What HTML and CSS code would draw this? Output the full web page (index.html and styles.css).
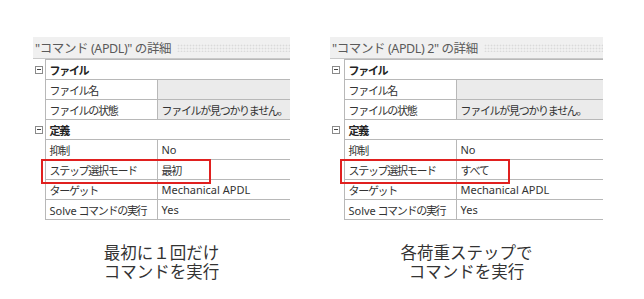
FILE: index.html
```html
<!doctype html>
<html>
<head>
<meta charset='utf-8'>
<title>コマンド (APDL) の詳細</title>
<link rel="stylesheet" href="styles.css">
</head>
<body>
<div class='page'>

  <div class='panel panel_first'>
    <div class='title'><span class='title_text'>"コマンド (APDL)" の詳細</span><span class='dots'></span></div>
    <table class='props'>
      <colgroup><col class='c_toggle'><col class='c_name'><col></colgroup>
      <tr class='group'><td class='toggle'><i class='minus'></i></td><td colspan='2' class='name'>ファイル</td></tr>
      <tr><td class='toggle'></td><td class='name'>ファイル名</td><td class='value grey'></td></tr>
      <tr><td class='toggle'></td><td class='name'>ファイルの状態</td><td class='value grey ja'>ファイルが見つかりません。</td></tr>
      <tr class='group'><td class='toggle'><i class='minus'></i></td><td colspan='2' class='name'>定義</td></tr>
      <tr><td class='toggle'></td><td class='name'>抑制</td><td class='value'>No</td></tr>
      <tr><td class='toggle'></td><td class='name mark'>ステップ選択モード<span class='highlight'></span></td><td class='value ja'>最初</td></tr>
      <tr><td class='toggle'></td><td class='name'>ターゲット</td><td class='value'>Mechanical APDL</td></tr>
      <tr class='last'><td class='toggle'></td><td class='name'><span class='latin'>Solve</span> コマンドの実行</td><td class='value'>Yes</td></tr>
    </table>
    <div class='caption'>
      <div class='caption_line'>最初に１回だけ</div>
      <div class='caption_line'>コマンドを実行</div>
    </div>
  </div>

  <div class='panel panel_second'>
    <div class='title'><span class='title_text'>"コマンド (APDL) 2" の詳細</span><span class='dots'></span></div>
    <table class='props'>
      <colgroup><col class='c_toggle'><col class='c_name'><col></colgroup>
      <tr class='group'><td class='toggle'><i class='minus'></i></td><td colspan='2' class='name'>ファイル</td></tr>
      <tr><td class='toggle'></td><td class='name'>ファイル名</td><td class='value grey'></td></tr>
      <tr><td class='toggle'></td><td class='name'>ファイルの状態</td><td class='value grey ja'>ファイルが見つかりません。</td></tr>
      <tr class='group'><td class='toggle'><i class='minus'></i></td><td colspan='2' class='name'>定義</td></tr>
      <tr><td class='toggle'></td><td class='name'>抑制</td><td class='value'>No</td></tr>
      <tr><td class='toggle'></td><td class='name mark'>ステップ選択モード<span class='highlight'></span></td><td class='value ja'>すべて</td></tr>
      <tr><td class='toggle'></td><td class='name'>ターゲット</td><td class='value'>Mechanical APDL</td></tr>
      <tr class='last'><td class='toggle'></td><td class='name'><span class='latin'>Solve</span> コマンドの実行</td><td class='value'>Yes</td></tr>
    </table>
    <div class='caption'>
      <div class='caption_line'>各荷重ステップで</div>
      <div class='caption_line'>コマンドを実行</div>
    </div>
  </div>

</div>
</body>
</html>
```

FILE: styles.css
```css
body {
  background: white;
  margin: 0;
  font-family: "Noto Sans", "Noto Sans CJK JP", sans-serif;
  color: #333;
}

.page {
  display: flex;
  gap: 40px;
  padding: 37px 0 0 33px;
}

.panel {
  display: flex;
  flex-direction: column;
}
.panel_first {
  width: 257px;
}
.panel_second {
  width: 273px;
}

.title {
  display: flex;
  align-items: center;
  height: 21px;
  padding-left: 2px;
  background: #f0f0f0;
  border-bottom: 1px solid #c9c9c9;
  color: #5a5a5a;
  font-size: 12.5px;
  letter-spacing: -0.4px;
  white-space: nowrap;
}
.dots {
  flex: 1;
  height: 8px;
  margin: 0 0 0 6px;
  background-image: radial-gradient(circle, #dadada 0.8px, transparent 1.1px);
  background-size: 3px 3px;
}

.props {
  border-collapse: collapse;
  table-layout: fixed;
  width: 100%;
  font-size: 11px;
}
.c_toggle {
  width: 12px;
}
.panel_second .c_toggle {
  width: 14px;
}
.c_name {
  width: 112px;
}
.props td {
  height: 19px;
  padding: 0 0 0 4px;
  border-top: 1px solid #b8b8b8;
  white-space: nowrap;
  overflow: hidden;
}
.props td.toggle {
  border: 0;
  padding: 0;
  text-align: left;
}
.props td.name {
  border-left: 1px solid #b8b8b8;
  border-right: 1px solid #b8b8b8;
  letter-spacing: -1.3px;
}
.props td.name .latin {
  letter-spacing: 0;
}
.props tr.group td.name {
  border-right: 0;
  font-weight: bold;
  color: #222;
}
.props tr.last td.name,
.props tr.last td.value {
  border-bottom: 1px solid #b8b8b8;
}
.props td.value.grey {
  background: #ebebeb;
}
.props td.ja {
  letter-spacing: -1.3px;
}
.props td.mark {
  position: relative;
  overflow: visible;
}

.minus {
  display: block;
  position: relative;
  width: 6px;
  height: 6px;
  margin-left: 2px;
  border: 1px solid #8a8a8a;
  background: white;
}
.minus::after {
  content: '';
  position: absolute;
  left: 1px;
  right: 1px;
  top: 2.5px;
  height: 1px;
  background: #444;
}

.highlight {
  position: absolute;
  left: -5px;
  top: -1px;
  width: 166px;
  height: 21px;
  border: 2px solid #e0201f;
}

.caption {
  margin: 23px 0 0;
  text-align: center;
  font-size: 16.5px;
  color: #333;
  font-family: "Noto Sans CJK JP", sans-serif;
}
.caption_line {
  height: 19px;
  line-height: 19px;
  overflow: visible;
}
```
